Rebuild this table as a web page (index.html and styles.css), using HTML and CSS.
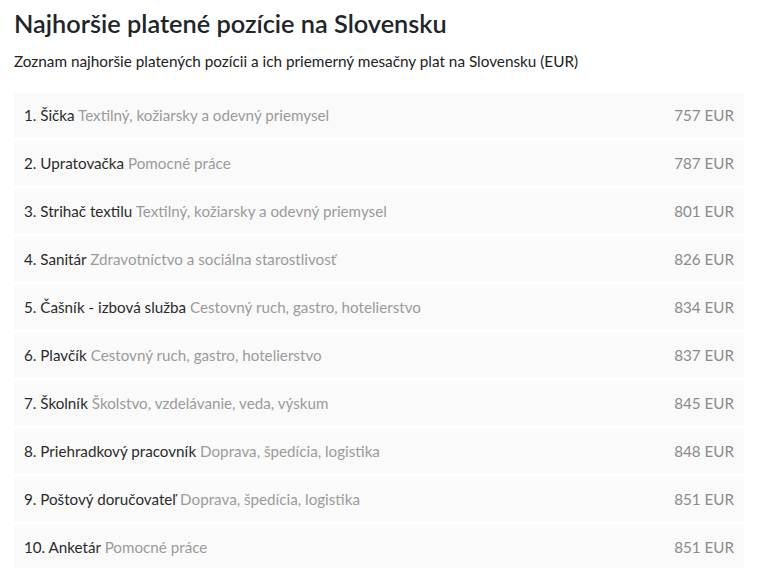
FILE: index.html
```html
<!DOCTYPE html>
<html lang="sk">
<head>
<meta charset="utf-8">
<link rel="stylesheet" href="styles.css">
</head>
<body>
<div class="wrap">
  <h1 class="title">Najhoršie platené pozície na Slovensku</h1>
  <p class="subtitle">Zoznam najhoršie platených pozícii a ich priemerný mesačny plat na Slovensku (EUR)</p>
  <ul class="list">
    <li class="row"><span class="name">1. Šička <span class="cat">Textilný, kožiarsky a odevný priemysel</span></span><span class="price">757 EUR</span></li>
    <li class="row"><span class="name">2. Upratovačka <span class="cat">Pomocné práce</span></span><span class="price">787 EUR</span></li>
    <li class="row"><span class="name">3. Strihač textilu <span class="cat">Textilný, kožiarsky a odevný priemysel</span></span><span class="price">801 EUR</span></li>
    <li class="row"><span class="name">4. Sanitár <span class="cat">Zdravotníctvo a sociálna starostlivosť</span></span><span class="price">826 EUR</span></li>
    <li class="row"><span class="name">5. Čašník - izbová služba <span class="cat">Cestovný ruch, gastro, hotelierstvo</span></span><span class="price">834 EUR</span></li>
    <li class="row"><span class="name">6. Plavčík <span class="cat">Cestovný ruch, gastro, hotelierstvo</span></span><span class="price">837 EUR</span></li>
    <li class="row"><span class="name">7. Školník <span class="cat">Školstvo, vzdelávanie, veda, výskum</span></span><span class="price">845 EUR</span></li>
    <li class="row"><span class="name">8. Priehradkový pracovník <span class="cat">Doprava, špedícia, logistika</span></span><span class="price">848 EUR</span></li>
    <li class="row"><span class="name">9. Poštový doručovateľ <span class="cat">Doprava, špedícia, logistika</span></span><span class="price">851 EUR</span></li>
    <li class="row"><span class="name">10. Anketár <span class="cat">Pomocné práce</span></span><span class="price">851 EUR</span></li>
  </ul>
</div>
</body>
</html>
```
FILE: styles.css
```css
html, body {
  margin: 0;
  padding: 0;
  background: #ffffff;
}
body {
  font-family: Lato, "Noto Sans", sans-serif;
  color: #333333;
}
.wrap {
  padding: 6px 19px 0 14px;
}
.title {
  margin: 0;
  font-size: 25.3px;
  line-height: 34px;
  font-weight: 600;
  color: #212529;
}
.subtitle {
  margin: 10px 0 21px;
  font-size: 15.3px;
  line-height: 22px;
  color: #222222;
}
.list {
  list-style: none;
  margin: 0;
  padding: 0;
  display: flex;
  flex-direction: column;
  gap: 4px;
}
.row {
  height: 44px;
  display: flex;
  align-items: center;
  justify-content: space-between;
  padding: 0 10px;
  background: #fafafa;
  font-size: 15.2px;
}
.name {
  color: #2a2a2a;
}
.cat {
  color: #9a9a9a;
}
.price {
  color: #8a8a8a;
}
```
